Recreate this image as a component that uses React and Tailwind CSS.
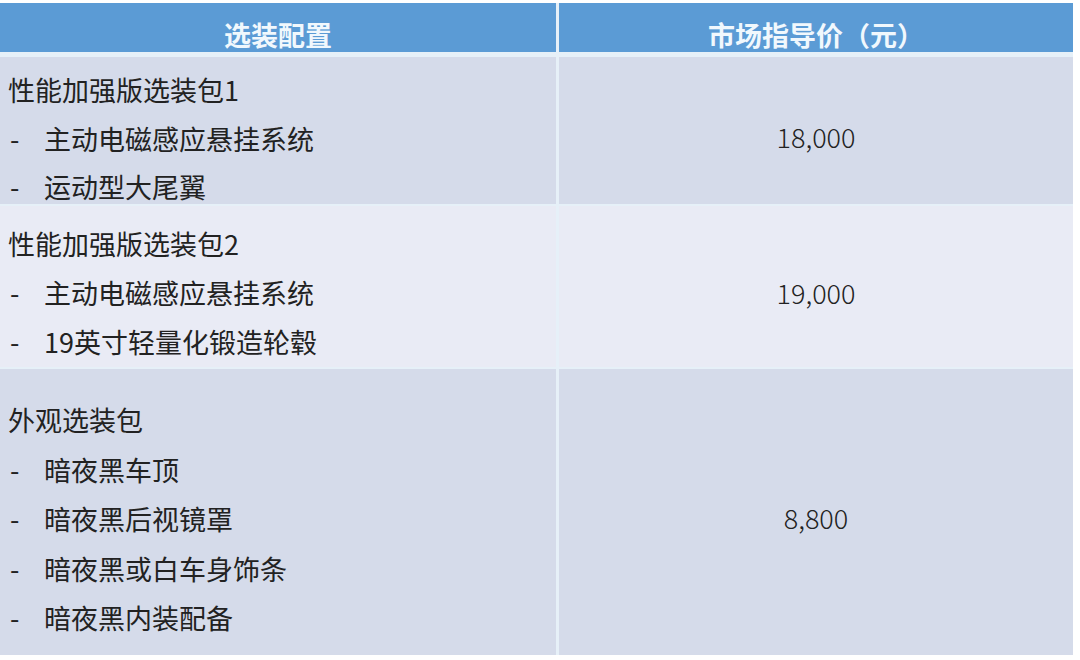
import React from "react";

const font = { fontFamily: '"Noto Sans CJK SC", "Noto Sans", sans-serif' };

function Item({ children }) {
  return (
    <div className="flex">
      <span className="w-[36px] pl-[2px]">-</span>
      <span>{children}</span>
    </div>
  );
}

function Row({ bg, h, pt, leading, title, items, price }) {
  return (
    <div className={`flex gap-[3px] ${h}`}>
      <div className={`w-[556px] ${bg} pl-[8px] ${pt} ${leading} overflow-visible`}>
        <div>{title}</div>
        {items.map((t) => (
          <Item key={t}>{t}</Item>
        ))}
      </div>
      <div className={`w-[514px] ${bg} flex items-center justify-center pt-[13px] font-light`}>
        {price}
      </div>
    </div>
  );
}

export default function App() {
  return (
    <div className="w-[1080px] h-[660px] bg-white overflow-hidden" style={font}>
      <div className="w-[1073px] mt-[3px] bg-[#e6f0f8] flex flex-col text-[27px] text-[#222]">
        <div className="flex gap-[3px] h-[49px] mb-[5px]">
          <div className="w-[556px] bg-[#5b9bd5] flex items-center justify-center pt-[16px] font-bold text-[#f1f8fd]">
            选装配置
          </div>
          <div className="w-[514px] bg-[#5b9bd5] flex items-center justify-center pt-[16px] font-bold text-[#f1f8fd]">
            市场指导价（元）
          </div>
        </div>
        <div className="flex flex-col gap-[2px]">
          <Row
            bg="bg-[#d5dbea]"
            h="h-[147px]"
            pt="pt-[9px]"
            leading="leading-[48.5px]"
            title="性能加强版选装包1"
            items={["主动电磁感应悬挂系统", "运动型大尾翼"]}
            price="18,000"
          />
          <Row
            bg="bg-[#e9ebf5]"
            h="h-[161px]"
            pt="pt-[13px]"
            leading="leading-[49px]"
            title="性能加强版选装包2"
            items={["主动电磁感应悬挂系统", "19英寸轻量化锻造轮毂"]}
            price="19,000"
          />
          <Row
            bg="bg-[#d5dbea]"
            h="h-[286px]"
            pt="pt-[26px]"
            leading="leading-[49.5px]"
            title="外观选装包"
            items={["暗夜黑车顶", "暗夜黑后视镜罩", "暗夜黑或白车身饰条", "暗夜黑内装配备"]}
            price="8,800"
          />
        </div>
      </div>
    </div>
  );
}
